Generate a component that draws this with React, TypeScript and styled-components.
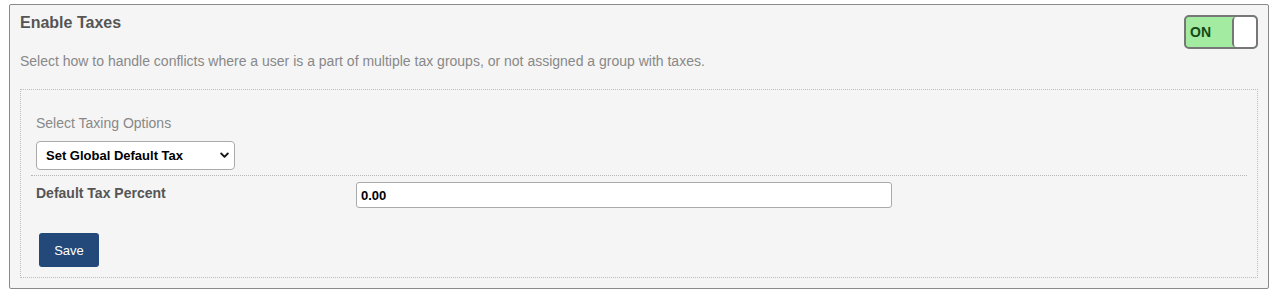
import React from "react";
import styled, { createGlobalStyle } from "styled-components";

const Global = createGlobalStyle`
  html, body { margin: 0; padding: 0; background: #ffffff; }
  body { font-family: "Liberation Sans", Arial, Helvetica, sans-serif; }
  * { box-sizing: border-box; }
`;

const Page = styled.div`
  padding: 4px 11px 8px 9px;
`;

const Panel = styled.section`
  border: 1px solid #8a8a8a;
  border-radius: 2px;
  background: #f5f5f5;
  padding: 10px;
`;

const Header = styled.div`
  display: flex;
  justify-content: space-between;
  align-items: flex-start;
`;

const Title = styled.h2`
  margin: 0;
  font-size: 16px;
  line-height: 16px;
  font-weight: bold;
  color: #555555;
`;

const Toggle = styled.div`
  display: flex;
  width: 74px;
  height: 34px;
  border: 2px solid #777777;
  border-radius: 5px;
  background: #a3eba1;
  overflow: hidden;
`;

const ToggleLabel = styled.span`
  flex: 1;
  display: flex;
  align-items: center;
  padding-left: 4px;
  font-size: 14px;
  font-weight: bold;
  color: #134a16;
`;

const Knob = styled.span`
  width: 24px;
  background: #ffffff;
  border-left: 2px solid #777777;
  border-radius: 4px;
`;

const Description = styled.p`
  margin: 4px 0 0;
  font-size: 14px;
  line-height: 16px;
  color: #888888;
`;

const Inner = styled.div`
  margin-top: 20px;
  border: 1px dotted #bdbdbd;
  padding: 24px 10px 10px;
`;

const OptionSection = styled.div`
  padding: 0 5px 5px;
  border-bottom: 1px dotted #b5b5b5;
`;

const FieldLabel = styled.div`
  font-size: 14px;
  line-height: 18px;
  color: #888888;
`;

const SelectWrap = styled.div`
  position: relative;
  margin-top: 9px;
  width: 199px;
`;

const Select = styled.select`
  appearance: none;
  -webkit-appearance: none;
  width: 199px;
  height: 29px;
  border: 1px solid #aaaaaa;
  border-radius: 4px;
  background: #ffffff;
  padding: 0 0 0 9px;
  font-family: "Liberation Sans", Arial, sans-serif;
  font-size: 13px;
  font-weight: bold;
  color: #000000;
  display: block;
`;

const Chevron = styled.svg`
  position: absolute;
  right: 6px;
  top: 11px;
  pointer-events: none;
`;

const Row = styled.div`
  display: flex;
  align-items: flex-start;
  padding: 6px 5px 0;
`;

const RowLabel = styled.div`
  width: 320px;
  margin-top: 3px;
  font-size: 14px;
  line-height: 16px;
  font-weight: bold;
  color: #555555;
`;

const TextInput = styled.input`
  width: 536px;
  height: 26px;
  border: 1px solid #aaaaaa;
  border-radius: 3px;
  background: #ffffff;
  padding: 0 4px;
  font-family: "Liberation Sans", Arial, sans-serif;
  font-size: 13px;
  font-weight: bold;
  color: #000000;
`;

const Actions = styled.div`
  padding: 25px 8px 0;
`;

const SaveButton = styled.button`
  width: 60px;
  height: 34px;
  border: none;
  border-radius: 3px;
  background: #23487a;
  color: #ffffff;
  font-family: "Liberation Sans", Arial, sans-serif;
  font-size: 13px;
  cursor: pointer;
`;

export default function App() {
  return (
    <>
      <Global />
      <Page>
        <Panel>
          <Header>
            <Title>Enable Taxes</Title>
            <Toggle>
              <ToggleLabel>ON</ToggleLabel>
              <Knob />
            </Toggle>
          </Header>
          <Description>
            Select how to handle conflicts where a user is a part of multiple tax groups, or not assigned a group with taxes.
          </Description>
          <Inner>
            <OptionSection>
              <FieldLabel>Select Taxing Options</FieldLabel>
              <SelectWrap>
                <Select defaultValue="global">
                  <option value="global">Set Global Default Tax</option>
                </Select>
                <Chevron width="9" height="7" viewBox="0 0 9 7">
                  <path d="M1.2 1.5 L4.5 4.8 L7.8 1.5" fill="none" stroke="#111" strokeWidth="1.8" strokeLinecap="round" strokeLinejoin="round" />
                </Chevron>
              </SelectWrap>
            </OptionSection>
            <Row>
              <RowLabel>Default Tax Percent</RowLabel>
              <TextInput defaultValue="0.00" />
            </Row>
            <Actions>
              <SaveButton>Save</SaveButton>
            </Actions>
          </Inner>
        </Panel>
      </Page>
    </>
  );
}
